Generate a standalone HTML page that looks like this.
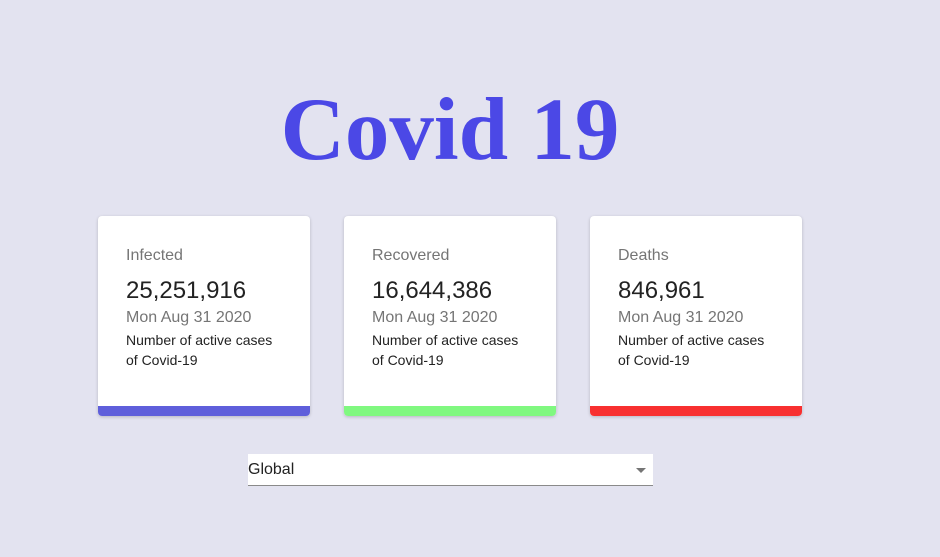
<!DOCTYPE html>
<html><head><style>
body{margin:0;width:940px;height:557px;background:#e3e3f0;font-family:"Liberation Sans",sans-serif;position:relative;overflow:hidden}
h1{position:absolute;left:0;top:70px;width:900px;text-align:center;margin:0;font-family:"Liberation Serif",serif;font-weight:bold;font-size:89px;line-height:120px;color:#4b48e6}
.card{position:absolute;top:216px;width:212px;height:200px;background:#fff;border-radius:4px;box-shadow:0 1px 3px rgba(0,0,0,.2);overflow:hidden}
.card .t{position:absolute;left:28px;top:31px;font-size:16px;color:#757575}
.card .n{position:absolute;left:28px;top:61px;font-size:24px;color:#222}
.card .d{position:absolute;left:28px;top:93px;font-size:16px;color:#757575}
.card .x{position:absolute;left:28px;top:114px;font-size:14px;line-height:20px;color:#222;width:155px}
.card .b{position:absolute;left:0;bottom:0;width:100%;height:10px}
.sel{position:absolute;left:248px;top:454px;width:405px;height:31px;background:#fff;border-bottom:1px solid #8a8a8a;font-size:16px;color:#222}
.sel span{position:absolute;left:0;top:7px}
.sel i{position:absolute;right:7px;top:14px;border-left:5px solid transparent;border-right:5px solid transparent;border-top:5px solid #757575}
</style></head><body>
<h1>Covid 19</h1>
<div class="card" style="left:98px"><div class="t">Infected</div><div class="n">25,251,916</div><div class="d">Mon Aug 31 2020</div><div class="x">Number of active cases of Covid-19</div><div class="b" style="background:#5f5fdb"></div></div>
<div class="card" style="left:344px"><div class="t">Recovered</div><div class="n">16,644,386</div><div class="d">Mon Aug 31 2020</div><div class="x">Number of active cases of Covid-19</div><div class="b" style="background:#80f880"></div></div>
<div class="card" style="left:590px"><div class="t">Deaths</div><div class="n">846,961</div><div class="d">Mon Aug 31 2020</div><div class="x">Number of active cases of Covid-19</div><div class="b" style="background:#f83030"></div></div>
<div class="sel"><span>Global</span><i></i></div>
</body></html>
